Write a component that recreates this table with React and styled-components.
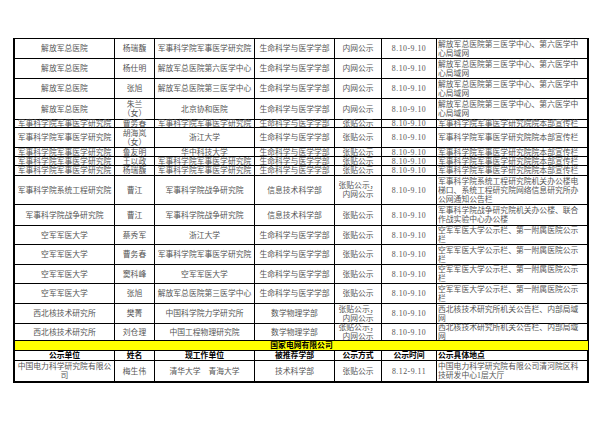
import styled, { createGlobalStyle } from "styled-components";

const GlobalStyle = createGlobalStyle`
    body {
        margin: 0;
        background: #fff;
    }
`

const MED = '生命科学与医学学部'
const DATE = '8.10-9.10'
const PLA = '解放军总医院第三医学中心、第六医学中心局域网'
const AMMS = '军事科学院军事医学研究院'
const AMMS_BOARD = '军事科学院军事医学研究院院本部宣传栏'
const AFMU = '空军军医大学公示栏、第一附属医院公示栏'
const NINT = '西北核技术研究所机关公告栏、内部局域网'

const rows = [
    { h: 20, cells: ['解放军总医院', '杨瑞馥', AMMS, MED, '内网公示', DATE, PLA] },
    { h: 20, cells: ['解放军总医院', '杨仕明', '解放军总医院第六医学中心', MED, '内网公示', DATE, PLA] },
    { h: 20, cells: ['解放军总医院', '张旭', '解放军总医院第三医学中心', MED, '内网公示', DATE, PLA] },
    { h: 21, cells: ['解放军总医院', '朱兰\n（女）', '北京协和医院', MED, '内网公示', DATE, PLA] },
    { h: 8, cells: [AMMS, '曹务春', AMMS, MED, '张贴公示', DATE, AMMS_BOARD] },
    { h: 20, cells: [AMMS, '胡海岚\n（女）', '浙江大学', MED, '张贴公示', DATE, AMMS_BOARD] },
    { h: 9, cells: [AMMS, '鲁友明', '华中科技大学', MED, '张贴公示', DATE, AMMS_BOARD] },
    { h: 9, cells: [AMMS, '王以政', AMMS, MED, '张贴公示', DATE, AMMS_BOARD] },
    { h: 10, cells: [AMMS, '杨瑞馥', AMMS, MED, '张贴公示', DATE, AMMS_BOARD] },
    { h: 29, cells: ['军事科学院系统工程研究院', '曹江', '军事科学院战争研究院', '信息技术科学部', '张贴公示，\n内网公示', DATE, '军事科学院系统工程研究院机关办公楼电梯口、系统工程研究院网络信息研究所办公网通知公告栏'] },
    { h: 21, cells: ['军事科学院战争研究院', '曹江', '军事科学院战争研究院', '信息技术科学部', '张贴公示', DATE, '军事科学院战争研究院机关办公楼、联合作战实验中心办公楼'] },
    { h: 19, cells: ['空军军医大学', '蔡秀军', '浙江大学', MED, '张贴公示', DATE, AFMU] },
    { h: 20, cells: ['空军军医大学', '曹务春', AMMS, MED, '张贴公示', DATE, AFMU] },
    { h: 19, cells: ['空军军医大学', '窦科峰', '空军军医大学', MED, '张贴公示', DATE, AFMU] },
    { h: 20, cells: ['空军军医大学', '张旭', '解放军总医院第三医学中心', MED, '张贴公示', DATE, AFMU] },
    { h: 20, cells: ['西北核技术研究所', '樊菁', '中国科学院力学研究所', '数学物理学部', '张贴公示，\n内网公示', DATE, NINT] },
    { h: 17, cells: ['西北核技术研究所', '刘仓理', '中国工程物理研究院', '数学物理学部', '张贴公示，\n内网公示', DATE, NINT] },
]

const header = ['公示单位', '姓名', '现工作单位', '被推荐学部', '公示方式', '公示时间', '公示具体地点']

const gridRows = [
    { h: 21, cells: ['中国电力科学研究院有限公司', '梅生伟', '清华大学　青海大学', '技术科学部', '张贴公示', '8.12-9.11', '中国电力科学研究院有限公司清河院区科技研发中心1层大厅'] },
]

const heights = [...rows.map(r => r.h), 10, 10, ...gridRows.map(r => r.h)]

function App() {
    return (
        <>
            <GlobalStyle />
            <Sheet $rows={heights}>
                {rows.map((row, i) => row.cells.map((text, j) => (
                    <Cell key={`r${i}-${j}`} $left={j === 6} $date={j === 5}>{text}</Cell>
                )))}
                <Band>国家电网有限公司</Band>
                {header.map((text, j) => (
                    <Cell key={`h${j}`} $left={j === 6} $bold>{text}</Cell>
                ))}
                {gridRows.map((row, i) => row.cells.map((text, j) => (
                    <Cell key={`g${i}-${j}`} $left={j === 6} $date={j === 5}>{text}</Cell>
                )))}
            </Sheet>
        </>
    )
}

export default App

const Sheet = styled.div`
    display: grid;
    width: max-content;
    margin: 38px 0 0 13px;
    grid-template-columns: 100px 40px 100px 80px 47px 55px 151px;
    grid-template-rows: ${p => p.$rows.map(h => h + 'px').join(' ')};
    border-top: 1px solid #000;
    border-left: 2px solid #000;
    border-right: 1px solid #000;
    border-bottom: 1px solid #000;
    font-family: 'Liberation Serif', 'Noto Sans CJK SC', serif;
    font-size: 7.8px;
    line-height: 9px;
    color: #555;
`

const Cell = styled.div`
    box-sizing: border-box;
    min-height: 0;
    border-right: 1px solid #000;
    border-bottom: 1px solid #000;
    display: flex;
    align-items: center;
    justify-content: ${p => p.$left ? 'flex-start' : 'center'};
    text-align: ${p => p.$left ? 'left' : 'center'};
    padding: ${p => p.$left ? '0 4px 0 1px' : '0 1px'};
    white-space: pre-line;
    font-weight: ${p => p.$bold ? 700 : 400};
    color: ${p => p.$bold ? '#000' : 'inherit'};
    letter-spacing: ${p => p.$date ? '0.5px' : '0'};
`

const Band = styled.div`
    grid-column: 1 / -1;
    box-sizing: border-box;
    border-bottom: 1px solid #000;
    background: #ffff00;
    display: flex;
    align-items: center;
    justify-content: center;
    font-weight: 700;
    color: #000;
`
